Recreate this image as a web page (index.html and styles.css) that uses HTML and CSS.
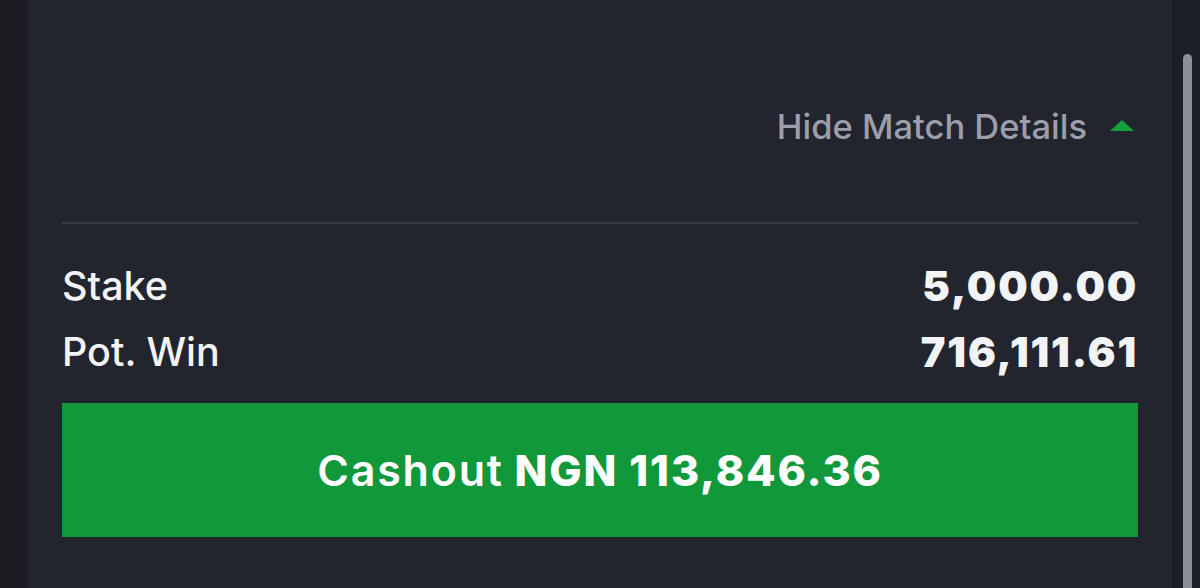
FILE: index.html
```html
<!DOCTYPE html>
<html>
<head>
<meta charset="utf-8">
<link rel="stylesheet" href="styles.css">
</head>
<body>
<div class="page">
  <div class="gutter-left"></div>
  <main class="panel">
    <div class="details-toggle">
      <span class="toggle-label">Hide Match Details</span>
      <svg class="toggle-caret" width="24" height="11" viewBox="0 0 24 11"><polygon points="0,11 12,0 24,11" fill="#14a03c"/></svg>
    </div>
    <div class="divider"></div>
    <div class="summary">
      <div class="row"><span class="label">Stake</span><span class="value">5,000.00</span></div>
      <div class="row"><span class="label">Pot. Win</span><span class="value">716,111.61</span></div>
    </div>
    <button class="cashout"><span class="cashout-word">Cashout</span> <strong>NGN 113,846.36</strong></button>
  </main>
  <div class="gutter-right"><div class="scroll-thumb"></div></div>
</div>
</body>
</html>
```

FILE: styles.css
```css
* { box-sizing: border-box; }
html, body { margin: 0; padding: 0; height: 100%; }
body { background: #22252e; font-family: Inter, "Noto Sans", sans-serif; overflow: hidden; }
.page { display: flex; height: 588px; }
.gutter-left { width: 28px; background: #1b1d23; flex: none; }
.gutter-right { width: 28px; background: #1c1e25; flex: none; padding-top: 54px; padding-left: 11px; }
.scroll-thumb { width: 9px; height: 560px; border-radius: 5px; background: #8d8f95; }
.panel { flex: 1; background: #22252e; padding: 0 34px; display: flex; flex-direction: column; }
.details-toggle { height: 222px; display: flex; justify-content: flex-end; align-items: flex-start; padding-top: 107px; gap: 23px; padding-right: 4px; }
.toggle-label { color: #9c9eab; font-size: 34.5px; font-weight: 500; line-height: 40px; }
.toggle-caret { margin-top: 13px; }
.divider { height: 2px; background: #393c48; }
.summary { padding-top: 42px; display: flex; flex-direction: column; gap: 26px; }
.row { display: flex; justify-content: space-between; align-items: center; height: 40px; }
.label { color: #f2f3f5; font-size: 39.5px; font-weight: 500; }
.value { color: #f2f3f5; font-size: 41.5px; font-weight: 900; letter-spacing: 1.8px; }
.cashout { margin-top: 31px; height: 134px; border: none; background: #11983a; color: #fff; font-family: Inter, Roboto, sans-serif; font-size: 43px; font-weight: 600; letter-spacing: 1.8px; display: flex; align-items: center; justify-content: center; gap: 0.25em; padding: 0; }
.cashout strong { font-weight: 800; }
```
